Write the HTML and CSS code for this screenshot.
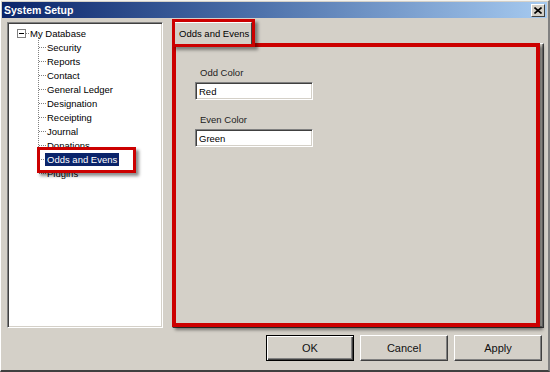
FILE: index.html
```html
<!DOCTYPE html>
<html lang="en">
<head>
    <meta charset="UTF-8">
    <title>System Setup</title>
    <link rel="stylesheet" href="styles.css">
</head>
<body>
    <div class="window">
        <div class="titlebar">
            <span class="title">System Setup</span>
            <span class="close-btn">
                <svg width="8" height="7" viewBox="0 0 8 7"><path d="M0.5 0.5 L7.5 6.5 M7.5 0.5 L0.5 6.5" stroke="#000" stroke-width="1.6" fill="none"/></svg>
            </span>
        </div>

        <div class="content">
            <div class="main">
                <div class="tree">
                    <div class="root-node">
                        <span class="expander">
                            <svg width="9" height="9" viewBox="0 0 9 9"><rect x="0.5" y="0.5" width="8" height="8" fill="#fff" stroke="#808080"/><path d="M2 4.5 H7" stroke="#000"/></svg>
                        </span>
                        <span class="stub"></span>
                        <span class="root-label">My Database</span>
                    </div>
                    <ul class="children">
                        <li>Security</li>
                        <li>Reports</li>
                        <li>Contact</li>
                        <li>General Ledger</li>
                        <li>Designation</li>
                        <li>Receipting</li>
                        <li>Journal</li>
                        <li>Donations</li>
                        <li class="selected"><span class="label">Odds and Evens</span></li>
                        <li>Plugins</li>
                    </ul>
                </div>

                <div class="tab-control">
                    <div class="tab-strip">
                        <div class="tab active">Odds and Evens</div>
                    </div>
                    <div class="tab-page">
                        <label class="field-label" for="oddColor">Odd Color</label>
                        <input class="field-input" type="text" id="oddColor" value="Red">

                        <label class="field-label second" for="evenColor">Even Color</label>
                        <input class="field-input" type="text" id="evenColor" value="Green">
                    </div>
                </div>
            </div>

            <div class="buttons">
                <button class="btn default">OK</button>
                <button class="btn">Cancel</button>
                <button class="btn">Apply</button>
            </div>
        </div>
    </div>
</body>
</html>
```

FILE: styles.css
```css
body {
    margin: 0;
    font-family: "Liberation Sans", Arial, sans-serif;
    font-size: 9.5px;
    color: #000;
    background-color: #d4d0c8;
}
.window {
    width: 550px;
    height: 372px;
    box-sizing: border-box;
    padding: 1px;
    background-color: #d4d0c8;
    border-top: 1px solid #f4f3ef;
    border-left: 1px solid #fff;
    border-right: 2px solid #808080;
    border-bottom: 2px solid #404040;
    display: flex;
    flex-direction: column;
}
.titlebar {
    height: 16px;
    display: flex;
    align-items: center;
    justify-content: space-between;
    padding-left: 2px;
    background: linear-gradient(to right, #0a246a 0%, #4a6ea8 45%, #a6caf0 100%);
}
.title {
    color: #fff;
    font-weight: bold;
    font-size: 10.5px;
}
.close-btn {
    width: 14px;
    height: 13px;
    margin-right: 2px;
    box-sizing: border-box;
    display: flex;
    align-items: center;
    justify-content: center;
    background-color: #d4d0c8;
    border: 1px solid;
    border-color: #fff #404040 #404040 #fff;
}
.content {
    flex: 1;
    padding: 4px 3px 0 5px;
    display: flex;
    flex-direction: column;
}
.main {
    display: flex;
    gap: 9px;
    height: 306px;
}

/* tree */
.tree {
    width: 156px;
    box-sizing: border-box;
    background-color: #fff;
    border: 1px solid;
    border-color: #808080 #fff #fff #808080;
    box-shadow: inset 1px 1px #404040, inset -1px -1px #d4d0c8;
    padding: 3px 0 0 9px;
}
.root-node {
    height: 14px;
    display: flex;
    align-items: center;
}
.expander {
    display: flex;
}
.stub {
    width: 3px;
    border-top: 1px dotted #808080;
}
.root-label {
    margin-left: 1px;
}
.children {
    list-style: none;
    margin: 0 0 0 21px;
    padding: 0;
    position: relative;
}
.children::before {
    content: "";
    position: absolute;
    left: 0;
    top: -3px;
    bottom: 7px;
    border-left: 1px dotted #808080;
}
.children li {
    height: 14px;
    display: flex;
    align-items: center;
    padding-left: 9px;
    position: relative;
}
.children li::before {
    content: "";
    position: absolute;
    left: 1px;
    top: 7px;
    width: 7px;
    border-top: 1px dotted #808080;
}
.selected .label {
    margin-left: -2px;
    padding: 1px 2px;
    background-color: #0a246a;
    color: #fff;
    position: relative;
    z-index: 1;
}
/* red annotation around the selected node */
.selected .label::after {
    content: "";
    position: absolute;
    left: -8px;
    right: -17px;
    top: -6px;
    bottom: -7px;
    border: 3px solid #cc0000;
    box-shadow: 3px 3px 3px rgba(0, 0, 0, 0.45);
}

/* tabs */
.tab-control {
    width: 372px;
    display: flex;
    flex-direction: column;
}
.tab-strip {
    height: 21px;
    display: flex;
}
.tab {
    width: 80px;
    height: 22px;
    box-sizing: border-box;
    padding: 5px 0 0 6px;
    border-left: 1px solid #fff;
    border-top: 1px solid #fff;
    border-right: 1px solid #404040;
    background-color: #d4d0c8;
    position: relative;
    z-index: 2;
}
.tab.active::after {
    content: "";
    position: absolute;
    left: -1px;
    right: -4px;
    top: -4px;
    bottom: -3px;
    border: 3px solid #cc0000;
    box-shadow: 3px 3px 3px rgba(0, 0, 0, 0.4);
}
.tab-page {
    flex: 1;
    position: relative;
    box-sizing: border-box;
    border: 1px solid;
    border-color: #fff #404040 #404040 #fff;
    box-shadow: inset -1px -1px #808080;
    padding: 23px 0 0 22px;
    display: flex;
    flex-direction: column;
    align-items: flex-start;
}
.tab-page::after {
    content: "";
    position: absolute;
    left: -1px;
    top: -1px;
    right: 3px;
    bottom: 0;
    border: 4px solid #cc0000;
    box-shadow: 3px 3px 3px rgba(0, 0, 0, 0.45);
}
.field-label {
    line-height: 12px;
    margin-left: 5px;
    color: #222;
}
.field-label.second {
    margin-top: 14px;
}
.field-input {
    margin-top: 3px;
    width: 118px;
    height: 18px;
    box-sizing: border-box;
    padding: 1px 0 0 3px;
    font-family: inherit;
    font-size: 9.5px;
    color: #000;
    background-color: #fff;
    border: 1px solid;
    border-color: #808080 #fff #fff #808080;
    box-shadow: inset 1px 1px #404040, inset -1px -1px #d4d0c8;
    outline: none;
}

/* buttons */
.buttons {
    display: flex;
    justify-content: flex-end;
    gap: 6px;
    margin-top: 7px;
    padding-right: 2px;
}
.btn {
    width: 88px;
    height: 26px;
    box-sizing: border-box;
    font-family: inherit;
    font-size: 11px;
    color: #111;
    background-color: #d4d0c8;
    border: 1px solid;
    border-color: #fff #404040 #404040 #fff;
    box-shadow: inset -1px -1px #808080;
    padding: 0;
}
.btn.default {
    border-color: #000;
    box-shadow: inset 1px 1px #fff, inset -1px -1px #404040, inset -2px -2px #808080;
}
```
